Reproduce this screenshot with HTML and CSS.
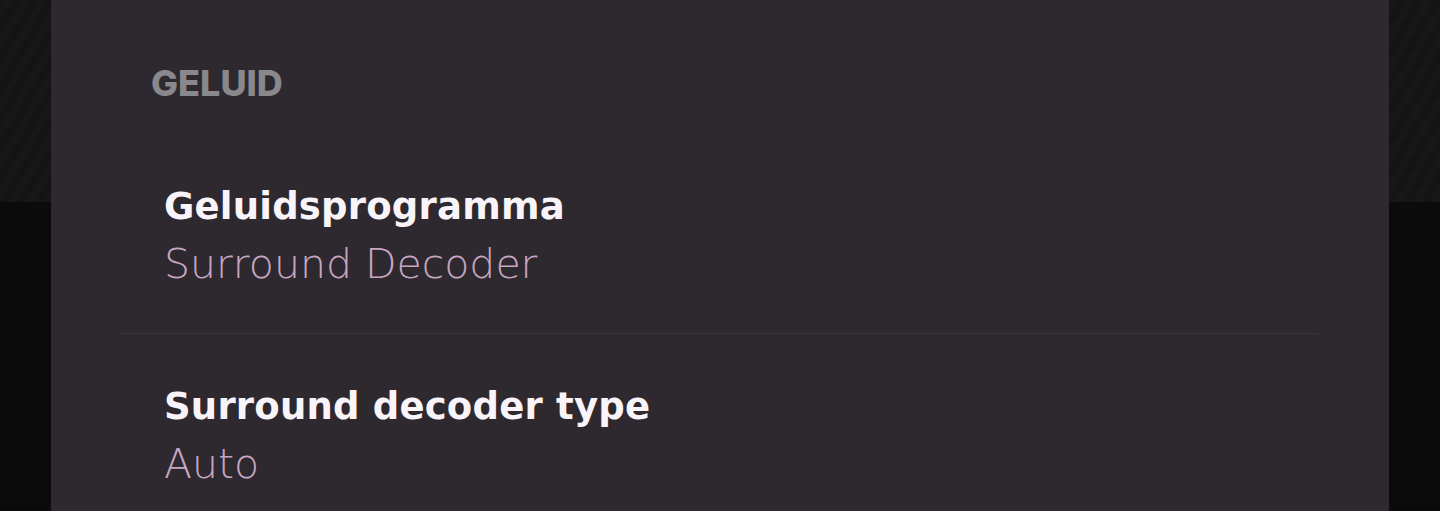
FILE: index.html
```html
<!DOCTYPE html>
<html lang="nl">
<head>
<meta charset="utf-8">
<title>Geluid</title>
<link rel="stylesheet" href="styles.css">
</head>
<body>
<main class="sheet">
  <h2 class="section-title">GELUID</h2>
  <ul class="settings">
    <li class="setting">
      <div class="setting-name">Geluidsprogramma</div>
      <div class="setting-value">Surround Decoder</div>
    </li>
    <li class="setting">
      <div class="setting-name">Surround decoder type</div>
      <div class="setting-value">Auto</div>
    </li>
  </ul>
</main>
</body>
</html>
```

FILE: styles.css
```css
html, body {
  margin: 0;
  padding: 0;
  height: 100%;
  overflow: hidden;
}

body {
  font-family: Inter, "Open Sans", sans-serif;
  background-color: #0b0b0b;
  background-image: repeating-linear-gradient(
    120deg,
    #131313 0px,
    #181818 7px,
    #131313 15px
  );
  background-size: 100% 202px;
  background-repeat: no-repeat;
}

.sheet {
  margin: 0 51px;
  min-height: 100%;
  background: #2d292f;
  padding: 63px 70px 0 69px;
  box-sizing: border-box;
}

.section-title {
  margin: 0 0 31px 31px;
  font-size: 36px;
  line-height: 40px;
  font-weight: 800;
  color: #89888c;
}

.settings {
  list-style: none;
  margin: 0;
  padding: 0;
}

.setting {
  padding: 49px 44px 41px;
}

.setting + .setting {
  border-top: 1px solid #38343a;
}

.setting-name {
  font-family: "DejaVu Sans", Inter, sans-serif;
  font-size: 37px;
  line-height: 48px;
  font-weight: 700;
  letter-spacing: 0.2px;
  color: #f9f4f9;
}

.setting-value {
  font-family: "DejaVu Sans", Inter, sans-serif;
  margin-top: 5px;
  font-size: 41px;
  line-height: 56px;
  font-weight: 200;
  color: #c6a6c1;
}
```
